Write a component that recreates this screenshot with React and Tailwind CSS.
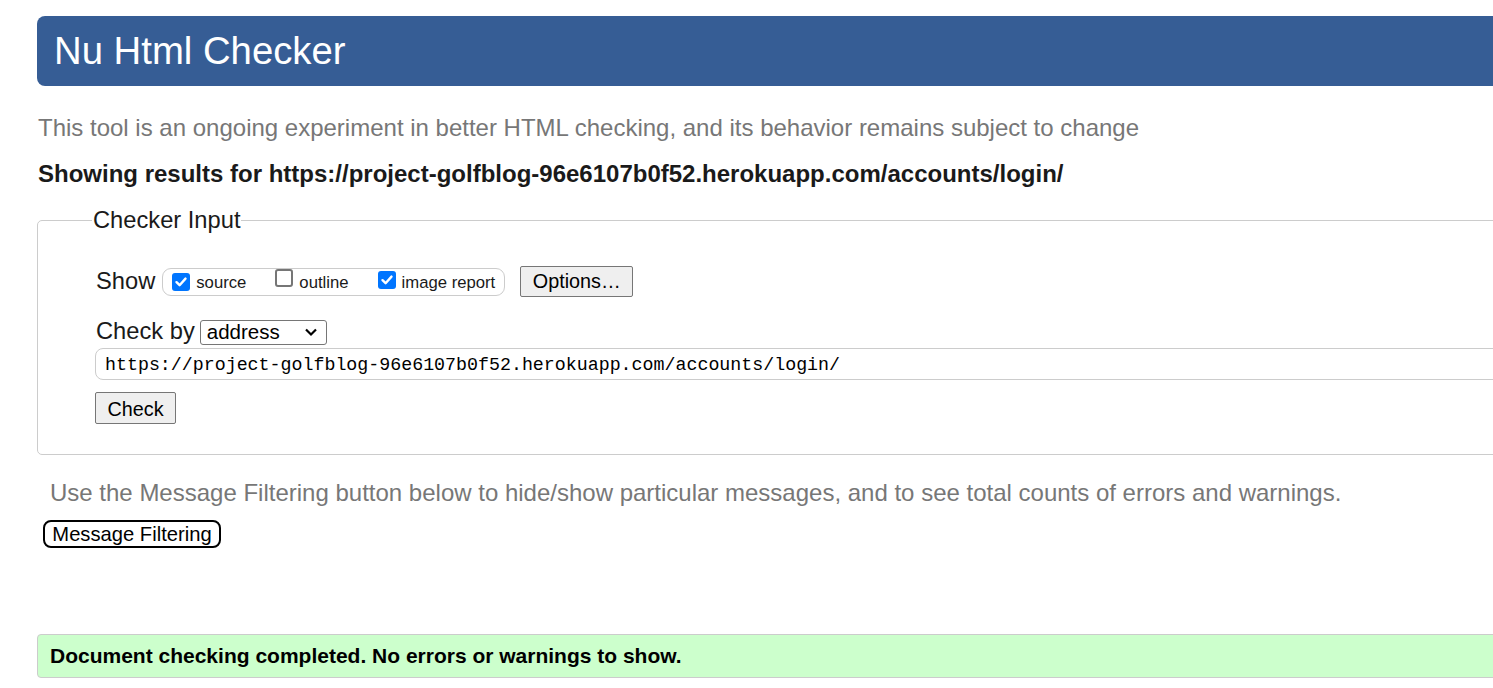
import React from "react";

const Check = ({ checked }) => (
  <span
    className={
      "inline-flex items-center justify-center w-[18px] h-[18px] rounded-[3px] " +
      (checked ? "bg-[#0075ff]" : "border-2 border-[#767676] bg-white")
    }
  >
    {checked && (
      <svg width="14" height="14" viewBox="0 0 14 14">
        <path d="M2.5 7.2 L5.6 10.2 L11.5 3.6" fill="none" stroke="white" strokeWidth="2.4" strokeLinecap="round" strokeLinejoin="round" />
      </svg>
    )}
  </span>
);

export default function App() {
  const sans = { fontFamily: '"Liberation Sans", Arial, sans-serif' };
  return (
    <div className="w-[1493px] h-[688px] overflow-hidden bg-white" style={sans}>
      <div className="w-[1600px] ml-[37px] pt-[16px]">
        <div className="h-[70px] bg-[#365d95] rounded-[8px] flex items-center pl-[17px]">
          <h1 className="text-white text-[38.3px] leading-none">Nu Html Checker</h1>
        </div>
        <p className="text-[#777777] text-[24px] leading-none mt-[30px] pl-px">
          This tool is an ongoing experiment in better HTML checking, and its behavior remains subject to change
        </p>
        <p className="text-[#1a1a1a] font-bold text-[24px] leading-none mt-[22px] pl-px">
          Showing results for https://project-golfblog-96e6107b0f52.herokuapp.com/accounts/login/
        </p>
        <div className="relative mt-[34px] h-[235px] border border-[#cccccc] rounded-[5px]">
          <span className="absolute left-[54px] top-[-12px] bg-white px-[1px] text-[23.7px] leading-none text-[#1a1a1a]">
            Checker Input
          </span>
          <div className="pl-[58px] pt-[45px] text-[#1a1a1a]">
            <div className="flex items-center h-[31px]">
              <span className="text-[23.7px] leading-none">Show</span>
              <div className="ml-[7px] h-[28px] w-[343px] border border-[#cccccc] rounded-[9px] flex items-center pl-[9px] text-[16.7px]">
                <Check checked />
                <span className="ml-[6px] mt-[3px]">source</span>
                <span className="ml-[29px]"><Check /></span>
                <span className="ml-[6px] mt-[3px]">outline</span>
                <span className="ml-[29px]"><Check checked /></span>
                <span className="ml-[6px] mt-[3px]">image report</span>
              </div>
              <button className="ml-[15px] h-[31px] w-[113px] border border-[#767676] rounded-[2px] bg-[#efefef] text-[19.8px] text-black">
                Options…
              </button>
            </div>
            <div className="flex items-center mt-[22px] h-[26px]">
              <span className="text-[23.7px] leading-none">Check by</span>
              <div className="ml-[5px] h-[25px] w-[127px] border border-[#767676] rounded-[3px] flex items-center pl-[6px] pr-[8px] justify-between">
                <span className="text-[20.5px] text-black leading-none">address</span>
                <svg width="14" height="10" viewBox="0 0 14 10">
                  <path d="M2 2.5 L7 7.5 L12 2.5" fill="none" stroke="black" strokeWidth="2.2" />
                </svg>
              </div>
            </div>
            <div className="mt-[3px] ml-[-1px] h-[32px] border border-[#cccccc] rounded-[8px] flex items-center pl-[9px] pt-[3px]">
              <span className="text-[18.3px] text-black" style={{ fontFamily: '"Liberation Mono", monospace' }}>
                https://project-golfblog-96e6107b0f52.herokuapp.com/accounts/login/
              </span>
            </div>
            <button className="mt-[12px] ml-[-1px] h-[32px] w-[81px] border border-[#767676] rounded-[2px] bg-[#efefef] text-[19.8px] text-black pt-[2px]">
              Check
            </button>
          </div>
        </div>
        <p className="text-[#777777] text-[24px] leading-none mt-[26px] pl-[13px]">
          Use the Message Filtering button below to hide/show particular messages, and to see total counts of errors and warnings.
        </p>
        <button className="mt-[15px] ml-[6px] h-[28px] w-[178px] border-2 border-black rounded-[8px] bg-white text-[20.2px] text-black leading-none">
          Message Filtering
        </button>
        <div className="mt-[86px] h-[44px] bg-[#ccffcc] border border-[#cccccc] rounded-[4px] flex items-center pl-[12px]">
          <span className="font-bold text-[21px] text-black">Document checking completed. No errors or warnings to show.</span>
        </div>
      </div>
    </div>
  );
}
